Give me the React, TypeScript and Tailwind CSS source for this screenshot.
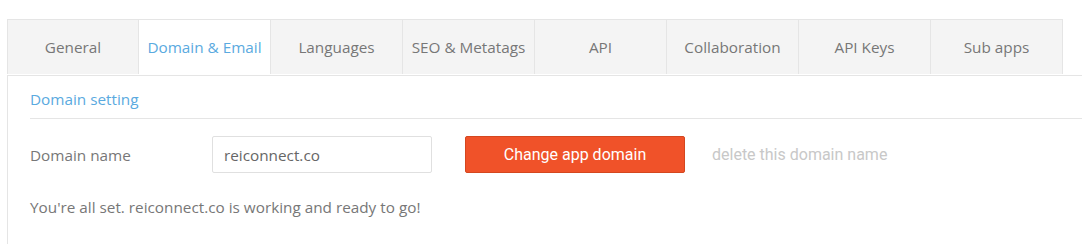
const tabs = [
  "General",
  "Domain & Email",
  "Languages",
  "SEO & Metatags",
  "API",
  "Collaboration",
  "API Keys",
  "Sub apps",
];

const ACTIVE = 1;

export default function App() {
  return (
    <div className="h-[244px] w-[1082px] overflow-hidden bg-white pl-[7px] pt-[19px] font-['Open_Sans',sans-serif] text-[15.3px] text-[#777]">
      <ul className="flex">
        {tabs.map((t, i) => (
          <li
            key={t}
            className={`flex h-[55px] w-[132px] items-center justify-center border-t border-r border-[#e5e5e5] pt-px ${
              i === 0 ? "border-l" : ""
            } ${i === ACTIVE ? "bg-white text-[#5aaae0]" : "bg-[#f4f4f4]"}`}
          >
            {t}
          </li>
        ))}
      </ul>

      <div className="mt-px h-[200px] border-t border-l border-[#e5e5e5] pl-[22px]">
        <div className="flex h-[43px] items-center border-b border-[#e5e5e5] pt-[4px] text-[#5aaae0]">
          Domain setting
        </div>

        <div className="mt-[17px] flex items-center">
          <label className="w-[182px] pt-[2px]">Domain name</label>
          <input
            readOnly
            value="reiconnect.co"
            className="h-[37px] w-[220px] rounded-[2px] border border-[#e0e0e0] px-[11px] text-[#666] outline-none"
          />
          <button
            type="button"
            className="ml-[33px] h-[37px] w-[220px] rounded-[2px] border border-[#d4471f] bg-[#f05229] font-['Roboto',sans-serif] text-[16px] text-white"
          >
            Change app domain
          </button>
          <a className="ml-[27px] font-['Roboto',sans-serif] text-[16px] text-[#c8c8c8]">delete this domain name</a>
        </div>

        <p className="mt-[23px]">You're all set. reiconnect.co is working and ready to go!</p>
      </div>
    </div>
  );
}
